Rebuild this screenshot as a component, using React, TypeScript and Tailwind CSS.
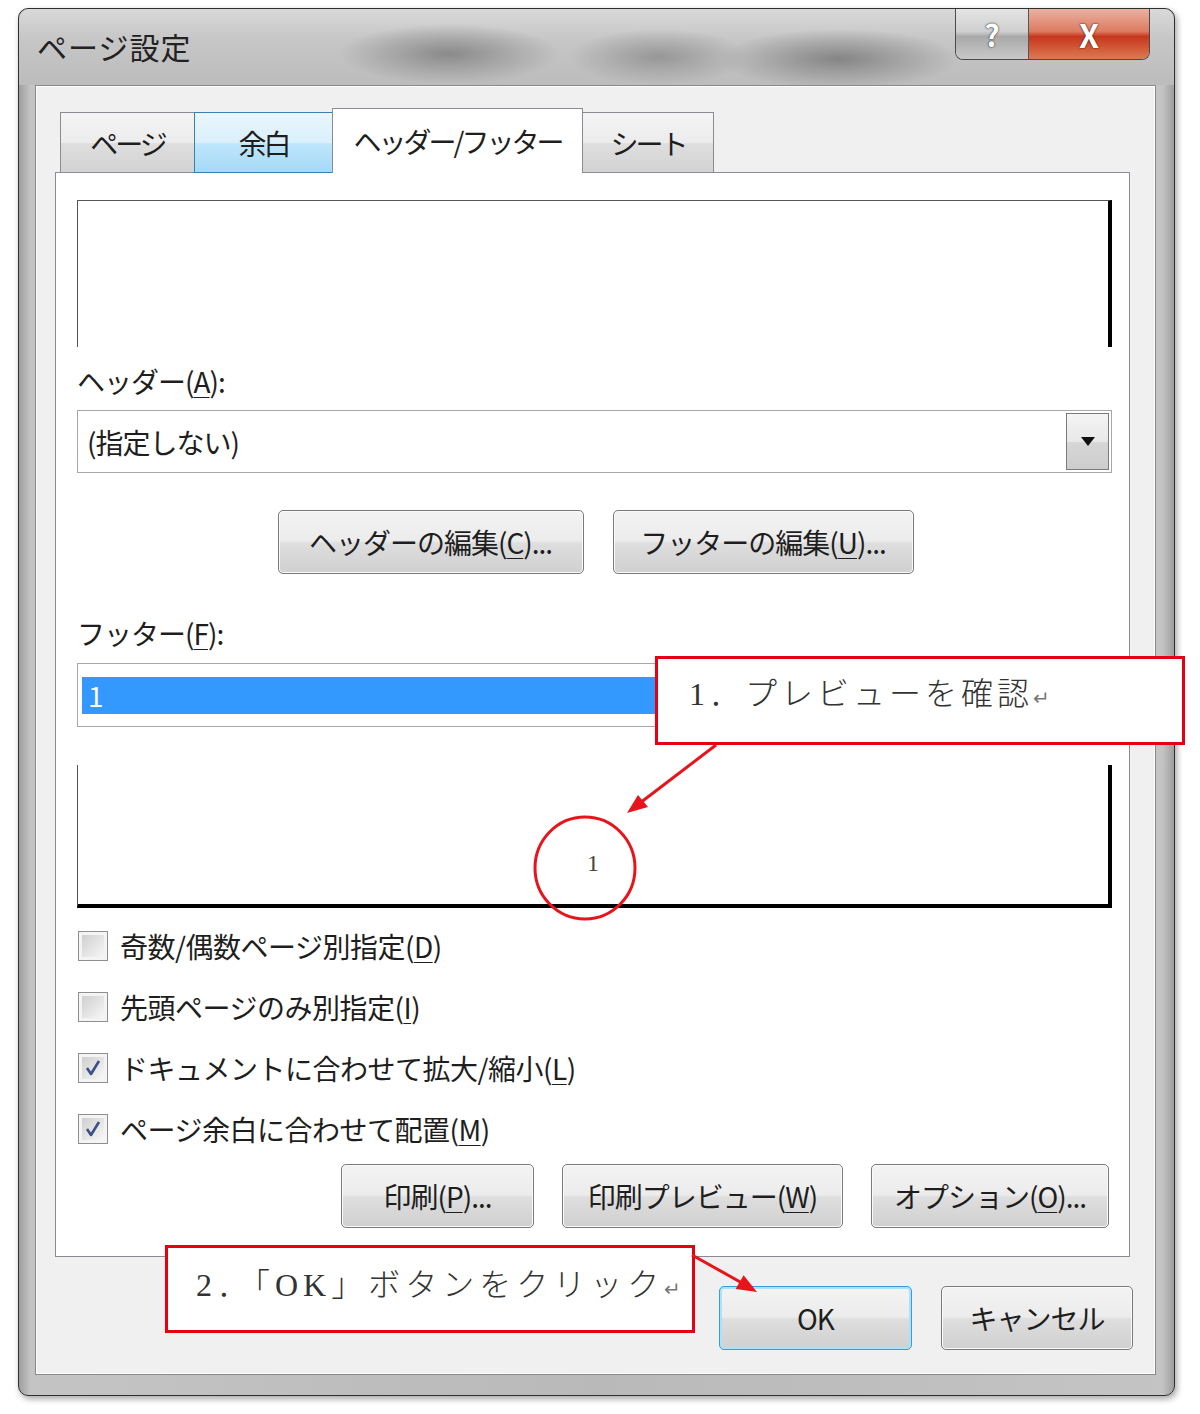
import React from "react";

const Mn = ({ c }: { c: string }) => (
  <span className="underline decoration-1 underline-offset-[4px]">{c}</span>
);

type BtnProps = { children: React.ReactNode; w: string; focus?: boolean };

function Button({ children, w, focus }: BtnProps) {
  return (
    <div
      className={`${w} h-[64px] flex items-center justify-center rounded-[5px] border ${
        focus
          ? "border-[#3a9bd6] shadow-[inset_0_0_0_2px_#a8e2fb]"
          : "border-[#7a7a7a] shadow-[inset_0_0_0_1px_#fafafa]"
      } bg-[linear-gradient(#f3f3f3_0%,#ececec_48%,#dedede_52%,#d0d0d0_100%)] text-[28px] text-[#1e1e1e] tracking-[-1px]`}
    >
      {children}
    </div>
  );
}

function Check({ checked, children }: { checked?: boolean; children: React.ReactNode }) {
  return (
    <div className="flex items-center h-[40px] gap-[12px]">
      <div className="ml-[1px] w-[30px] h-[30px] border border-[#8e8f8f] bg-[#f4f4f4] p-[3px]">
        <div className="w-full h-full bg-[linear-gradient(135deg,#cfcfcf,#f7f7f7)] flex items-center justify-center">
          {checked && (
            <svg width="20" height="20" viewBox="0 0 20 20">
              <path d="M4 10 L8 16 L16 3" stroke="#3b4f8a" strokeWidth="2.6" fill="none" strokeLinejoin="round" />
            </svg>
          )}
        </div>
      </div>
      <span className="text-[28px] leading-[40px] tracking-[-0.5px] text-[#1e1e1e]">{children}</span>
    </div>
  );
}

function Arrow() {
  return (
    <div className="ml-auto mr-[2px] w-[43px] h-[57px] border border-[#7a7a7a] bg-[linear-gradient(#f4f4f4,#e8e8e8_50%,#d6d6d6_52%,#cdcdcd)] flex items-center justify-center">
      <svg width="14" height="9" viewBox="0 0 14 9">
        <path d="M0 0 H14 L7 9 Z" fill="#111" />
      </svg>
    </div>
  );
}

const tabBase =
  "flex items-center justify-center border text-[28px] text-[#1e1e1e] tracking-[-3px]";

export default function App() {
  return (
    <div className="relative w-[1200px] h-[1414px] bg-white font-['Noto_Sans_CJK_JP',sans-serif] overflow-hidden">
      {/* window */}
      <div className="ml-[18px] mt-[8px] w-[1157px] h-[1388px] rounded-[10px] border border-[#2f2f2f] bg-[linear-gradient(90deg,#9e9e9e,#c4c4c4_1%,#b9b9b9_50%,#c4c4c4_99%,#9e9e9e)] shadow-[2px_3px_6px_rgba(0,0,0,0.35)] flex flex-col">
        {/* title bar */}
        <div className="h-[76px] flex items-start rounded-t-[10px] bg-[radial-gradient(ellipse_110px_30px_at_430px_45px,#8a8a8a,transparent),radial-gradient(ellipse_90px_28px_at_640px_48px,#979797,transparent),radial-gradient(ellipse_120px_30px_at_820px_50px,#858585,transparent),linear-gradient(#d9d9d9,#c6c6c6_40%,#bcbcbc)]">
          <div className="ml-[18px] mt-[20px] text-[30px] leading-[34px] text-[#222] tracking-[1px]">
            ページ設定
          </div>
          <div className="ml-auto mr-[24px] flex h-[51px] border border-t-0 border-[#4a4a4a] rounded-b-[8px] overflow-hidden">
            <div className="w-[73px] flex items-center justify-center border-r border-[#555] bg-[linear-gradient(#e4e4e4,#cfcfcf_45%,#a9a9a9_55%,#c8c8c8)] text-[30px] font-bold text-white [text-shadow:0_0_2px_#333,0_0_1px_#333]">
              ?
            </div>
            <div className="w-[120px] flex items-center justify-center bg-[linear-gradient(#eab2a2,#dc7a60_45%,#c6361c_55%,#dd7a52)] text-[32px] font-bold text-white [text-shadow:0_0_2px_#5a1a10,0_0_1px_#5a1a10]">
              X
            </div>
          </div>
        </div>

        {/* client area */}
        <div className="ml-[16px] w-[1121px] h-[1290px] border border-[#8a8a8a] bg-[#f0f0f0] shadow-[inset_0_0_0_1px_#fdfdfd] flex flex-col">
          <div className="ml-[19px] mt-[22px] w-[1075px]">
            {/* tabs */}
            <div className="relative z-10 flex items-end h-[65px] pl-[5px] -mb-px">
              <div className={`${tabBase} w-[135px] h-[61px] border-[#898c95] bg-[linear-gradient(#f4f4f4,#ececec_50%,#dedede_52%,#d3d3d3)]`}>
                ページ
              </div>
              <div className={`${tabBase} -ml-px w-[139px] h-[61px] border-[#3c7fb1] bg-[linear-gradient(#eaf6fd,#d9f0fc_50%,#bee6fd_52%,#a7d9f5)]`}>
                余白
              </div>
              <div className={`${tabBase} -ml-px w-[251px] h-[65px] border-[#898c95] border-b-0 bg-white`}>
                ヘッダー/フッター
              </div>
              <div className={`${tabBase} -ml-px w-[132px] h-[61px] border-[#898c95] bg-[linear-gradient(#f4f4f4,#ececec_50%,#dedede_52%,#d3d3d3)]`}>
                シート
              </div>
            </div>

            {/* panel */}
            <div className="h-[1085px] border border-[#898c95] bg-white pl-[21px] pr-[17px] pt-[27px] flex flex-col text-[#1e1e1e]">
              <div className="h-[147px] border-t border-l border-[#555] border-r-[4px] border-r-black" />

              <div className="mt-[19px] h-[30px] leading-[30px] text-[28px] tracking-[-1px]">
                ヘッダー(<Mn c="A" />):
              </div>

              <div className="mt-[14px] h-[63px] border border-[#a5a7ad] bg-white flex items-center">
                <span className="pl-[9px] text-[28px] tracking-[-1px]">(指定しない)</span>
                <Arrow />
              </div>

              <div className="mt-[37px] flex justify-center gap-[29px] pl-[2px]">
                <Button w="w-[306px]">
                  ヘッダーの編集(<Mn c="C" />)...
                </Button>
                <Button w="w-[301px]">
                  フッターの編集(<Mn c="U" />)...
                </Button>
              </div>

              <div className="mt-[44px] h-[30px] leading-[30px] text-[28px] tracking-[-1px]">
                フッター(<Mn c="F" />):
              </div>

              <div className="mt-[15px] h-[64px] border border-[#a5a7ad] bg-white flex items-center">
                <div className="ml-[4px] w-[980px] h-[37px] bg-[#3399ff] text-white text-[28px] leading-[37px] pl-[6px]">
                  1
                </div>
                <Arrow />
              </div>

              <div className="mt-[38px] h-[143px] border-l border-[#555] border-r-[4px] border-r-black border-b-[4px] border-b-black flex items-end justify-center pb-[28px]">
                <span className="text-[24px] leading-[26px] text-[#444] font-['Liberation_Serif',serif]">1</span>
              </div>

              <div className="mt-[18px] flex flex-col gap-[21px]">
                <Check>
                  奇数/偶数ページ別指定(<Mn c="D" />)
                </Check>
                <Check>
                  先頭ページのみ別指定(<Mn c="I" />)
                </Check>
                <Check checked>
                  ドキュメントに合わせて拡大/縮小(<Mn c="L" />)
                </Check>
                <Check checked>
                  ページ余白に合わせて配置(<Mn c="M" />)
                </Check>
              </div>

              <div className="mt-[15px] flex justify-end gap-[28px] mr-[3px]">
                <Button w="w-[193px]">
                  印刷(<Mn c="P" />)...
                </Button>
                <Button w="w-[281px]">
                  印刷プレビュー(<Mn c="W" />)
                </Button>
                <Button w="w-[238px]">
                  オプション(<Mn c="O" />)...
                </Button>
              </div>
            </div>
          </div>

          <div className="mt-[29px] flex justify-end gap-[29px] mr-[22px]">
            <Button w="w-[193px]" focus>
              OK
            </Button>
            <Button w="w-[192px]">キャンセル</Button>
          </div>
        </div>
      </div>

      {/* annotations */}
      <div className="absolute left-[655px] top-[656px] w-[530px] h-[89px] border-[3px] border-[#e60012] bg-white pl-[31px] pt-[16px]">
        <span className="text-[32px] leading-[38px] tracking-[4px] text-[#333] font-light font-['Liberation_Serif','Noto_Sans_CJK_JP',serif]">
          1．プレビューを確認<span className="text-[20px] text-[#777] tracking-normal">↵</span>
        </span>
      </div>
      <div className="absolute left-[165px] top-[1245px] w-[530px] h-[88px] border-[3px] border-[#e60012] bg-white pl-[28px] pt-[18px]">
        <span className="text-[32px] leading-[38px] tracking-[5px] text-[#333] font-light font-['Liberation_Serif','Noto_Sans_CJK_JP',serif]">
          2．「OK」ボタンをクリック<span className="text-[20px] text-[#777] tracking-normal">↵</span>
        </span>
      </div>
      <svg className="absolute inset-0 pointer-events-none" width="1200" height="1414" viewBox="0 0 1200 1414">
        <ellipse cx="585" cy="868" rx="50" ry="51" fill="none" stroke="#e8141b" strokeWidth="3" />
        <line x1="716" y1="745" x2="640" y2="803" stroke="#e8141b" strokeWidth="3" />
        <polygon points="627,813 648,807 638,795" fill="#e8141b" />
        <line x1="692" y1="1255" x2="742" y2="1283" stroke="#e8141b" strokeWidth="3" />
        <polygon points="757,1292 735.6,1289 743.6,1275.2" fill="#e8141b" />
      </svg>
    </div>
  );
}
